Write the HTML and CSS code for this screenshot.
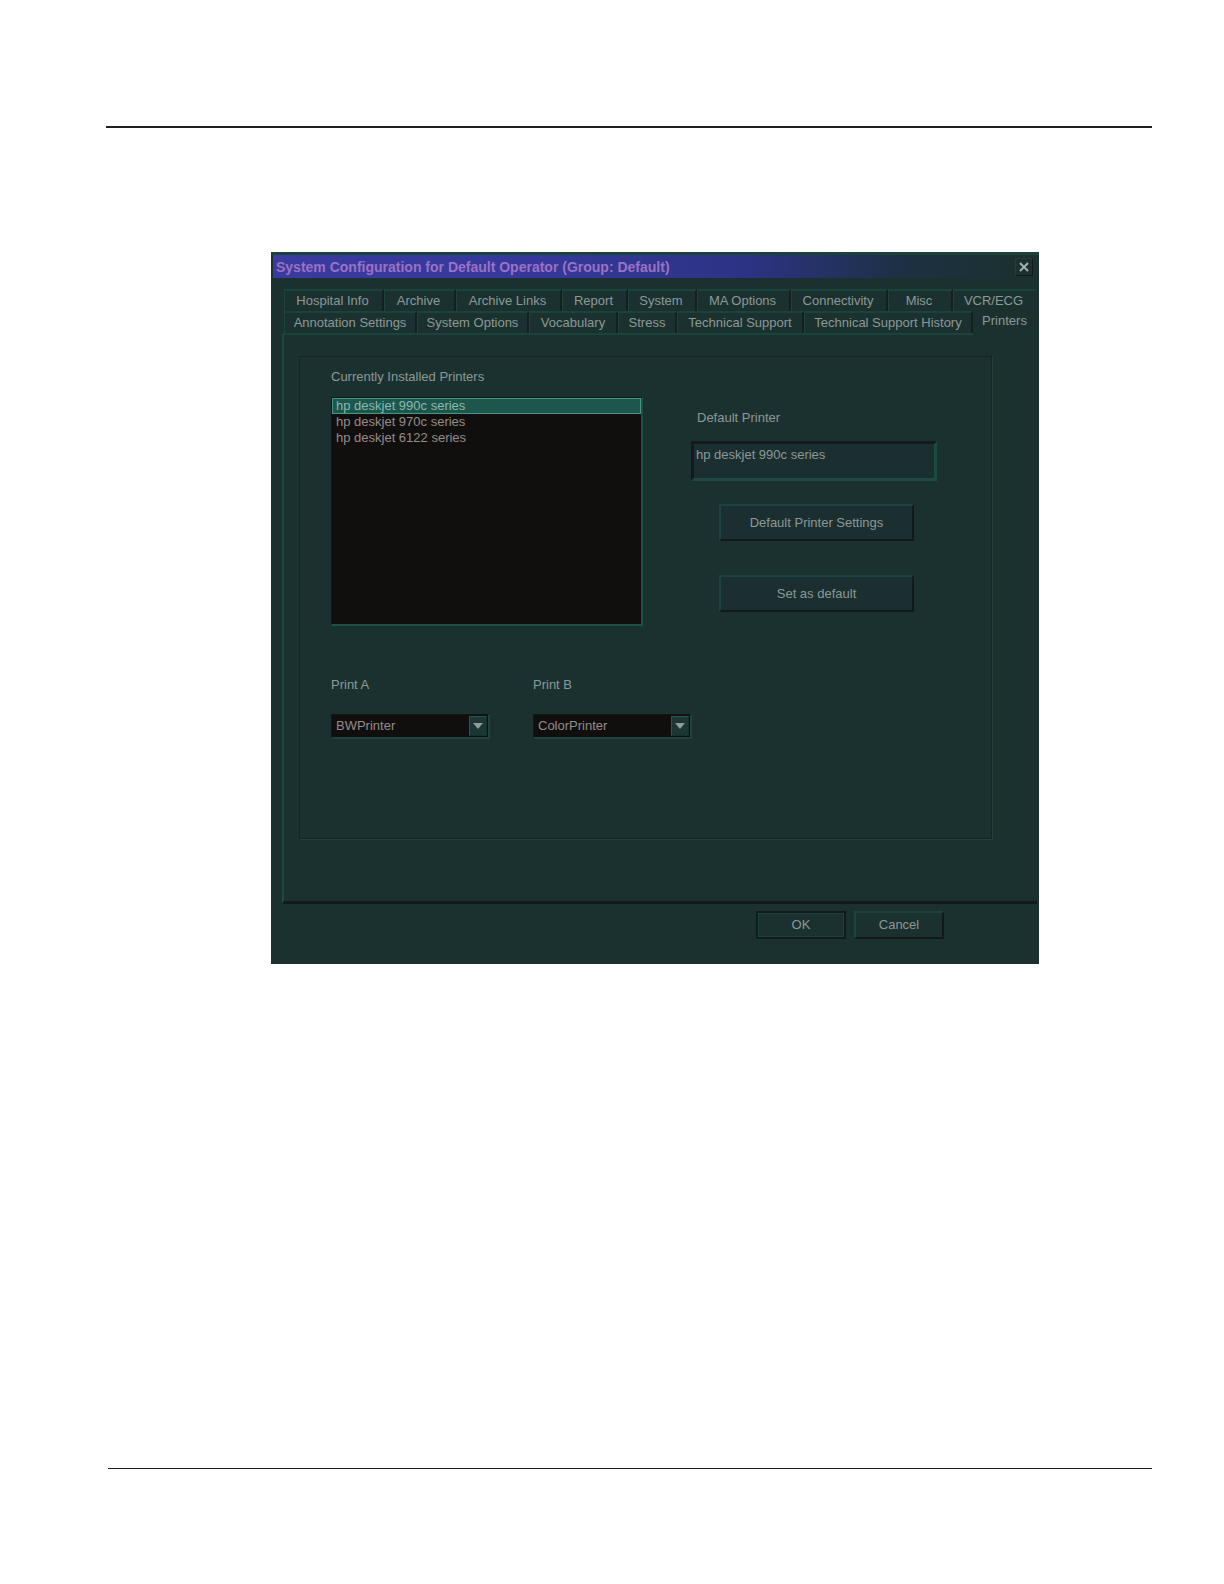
FILE: index.html
```html
<!DOCTYPE html>
<html lang="en">
<head>
    <meta charset="UTF-8">
    <meta name="viewport" content="width=device-width, initial-scale=1.0">
    <title>System Configuration</title>
    <link rel="stylesheet" href="styles.css">
</head>
<body>
    <header class="page-header"></header>

    <main class="content">
        <section class="window">
            <div class="titlebar">
                <h1>System Configuration for Default Operator (Group: Default)</h1>
                <button type="button" class="close" aria-label="Close">
                    <svg width="10" height="10" viewBox="0 0 10 10"><path d="M1 1L9 9M9 1L1 9" stroke="currentColor" stroke-width="2"/></svg>
                </button>
            </div>

            <div class="tabs" role="tablist">
                <div class="tab-row tab-row-back">
                    <button type="button" role="tab">Hospital Info</button>
                    <button type="button" role="tab">Archive</button>
                    <button type="button" role="tab">Archive Links</button>
                    <button type="button" role="tab">Report</button>
                    <button type="button" role="tab">System</button>
                    <button type="button" role="tab">MA Options</button>
                    <button type="button" role="tab">Connectivity</button>
                    <button type="button" role="tab">Misc</button>
                    <button type="button" role="tab">VCR/ECG</button>
                </div>
                <div class="tab-row tab-row-front">
                    <button type="button" role="tab">Annotation Settings</button>
                    <button type="button" role="tab">System Options</button>
                    <button type="button" role="tab">Vocabulary</button>
                    <button type="button" role="tab">Stress</button>
                    <button type="button" role="tab">Technical Support</button>
                    <button type="button" role="tab">Technical Support History</button>
                    <button type="button" role="tab" class="active" aria-selected="true">Printers</button>
                </div>
            </div>

            <form class="panel">
                <div class="group">
                    <div class="columns">
                        <div class="installed">
                            <label for="installed">Currently Installed Printers</label>
                            <select id="installed" class="listbox" size="14">
                                <option selected>hp deskjet 990c series</option>
                                <option>hp deskjet 970c series</option>
                                <option>hp deskjet 6122 series</option>
                            </select>
                        </div>
                        <div class="default">
                            <label for="defaultPrinter">Default Printer</label>
                            <input type="text" id="defaultPrinter" value="hp deskjet 990c series" readonly>
                            <button type="button" class="button wide">Default Printer Settings</button>
                            <button type="button" class="button wide">Set as default</button>
                        </div>
                    </div>
                    <div class="assign">
                        <div class="field">
                            <label for="printA">Print A</label>
                            <div class="combo">
                                <select id="printA">
                                    <option>BWPrinter</option>
                                    <option>ColorPrinter</option>
                                </select>
                                <span class="arrow"><svg width="10" height="6" viewBox="0 0 10 6"><path d="M0 0H10L5 6Z" fill="currentColor"/></svg></span>
                            </div>
                        </div>
                        <div class="field">
                            <label for="printB">Print B</label>
                            <div class="combo">
                                <select id="printB">
                                    <option>ColorPrinter</option>
                                    <option>BWPrinter</option>
                                </select>
                                <span class="arrow"><svg width="10" height="6" viewBox="0 0 10 6"><path d="M0 0H10L5 6Z" fill="currentColor"/></svg></span>
                            </div>
                        </div>
                    </div>
                </div>
            </form>

            <div class="actions">
                <button type="button" class="button ok">OK</button>
                <button type="button" class="button">Cancel</button>
            </div>
        </section>
    </main>

    <footer class="page-footer"></footer>
</body>
</html>
```
FILE: styles.css
```css
* {
    box-sizing: border-box;
}

body {
    display: flex;
    flex-direction: column;
    min-height: 100vh;
    margin: 0;
    padding: 126px 72px 115px 106px;
    background-color: #fff;
    font-family: "Liberation Sans", Arial, sans-serif;
    font-size: 13px;
    line-height: 16px;
    color: #8b9997;
}

button,
input,
select {
    font: inherit;
    color: inherit;
    margin: 0;
    border-radius: 0;
    outline: none;
}

.page-header {
    border-top: 2px solid #202022;
}

.page-footer {
    margin-top: auto;
    margin-left: 2px;
    border-top: 1px solid #202022;
}

.content {
    padding: 124px 113px 0 165px;
}

.window {
    background-color: #1b312f;
    border-top: 3px solid #1c403a;
}

/* Title bar */
.titlebar {
    display: flex;
    align-items: center;
    justify-content: space-between;
    height: 23px;
    margin-left: 2px;
    padding: 0 6px 0 3px;
    background: linear-gradient(to right, #3a3a9f 0%, #35389a 35%, #2c3384 62%, #1d3044 82%, #1b312f 97%);
}

.titlebar h1 {
    margin: 0;
    font-size: 14px;
    font-weight: bold;
    white-space: nowrap;
    color: #9a72c4;
}

.close {
    display: flex;
    align-items: center;
    justify-content: center;
    width: 18px;
    height: 18px;
    padding: 0;
    border: 1px solid;
    border-color: #1e403b #13191b #13191b #1e403b;
    background: #1b312f;
    color: #a3b0ae;
}

/* Tabs */
.tabs {
    padding: 11px 2px 0 13px;
}

.tab-row {
    display: grid;
}

.tab-row-back {
    grid-template-columns: 100fr 72fr 106fr 66fr 69fr 94fr 97fr 65fr 84fr;
}

.tab-row-front {
    grid-template-columns: 133fr 112fr 89fr 59fr 127fr 169fr 64fr;
}

.tab-row button {
    min-width: 0;
    height: 22px;
    padding: 0;
    border: solid;
    border-width: 2px 2px 0 1px;
    border-color: #1b433d #14201f #1b433d #1c443e;
    background: #1b312f;
    white-space: nowrap;
}

.tab-row-back button {
    padding-right: 2px;
}

.tab-row-back button:last-child {
    border-right-color: #1b312f;
}

/* The selected tab runs over the top edge of the tab page */
.tab-row .active {
    position: relative;
    height: 24px;
    margin-bottom: -2px;
    padding-bottom: 7px;
    border-color: #1b312f;
}

/* Tab page */
.panel {
    margin: 0 2px 0 11px;
    padding: 21px 45px 62px 15px;
    border: solid;
    border-width: 2px 0 3px 2px;
    border-color: #1b433d #1b433d #16191c #1c4840;
}

.group {
    min-height: 483px;
    padding: 12px 54px 0 31px;
    border: 1px solid #142523;
    box-shadow: 1px 1px 0 #234039;
}

.group label {
    display: block;
}

.columns {
    display: flex;
    justify-content: space-between;
}

.installed {
    width: 312px;
}

.listbox {
    display: block;
    width: 100%;
    height: 229px;
    margin-top: 12px;
    padding: 0;
    border: solid;
    border-width: 1px 2px 2px 1px;
    border-color: #151516 #1d5047 #1d5047 #151516;
    background-color: #110f0e;
    color: #958c8b;
    overflow: hidden;
}

.listbox option {
    min-height: 16px;
    padding: 0 4px;
    line-height: 16px;
}

.listbox option:checked {
    background: linear-gradient(#1c564d, #1c564d);
    box-shadow: inset 0 0 0 1px #4d9486;
    -webkit-text-fill-color: #8bbab1;
}

.default {
    display: flex;
    flex-direction: column;
    width: 246px;
    padding-top: 41px;
}

.default label {
    padding-left: 6px;
}

.default input {
    height: 40px;
    margin-top: 15px;
    padding: 0 2px 14px;
    border: 3px solid;
    border-color: #14191b #1c4941 #1c4941 #14191b;
    background: #1b2f31;
}

.button {
    width: 90px;
    height: 28px;
    padding: 0;
    border: 2px solid;
    border-color: #1c443e #14191b #14191b #1c443e;
    background: #1b312f;
}

.wide {
    width: 195px;
    height: 37px;
    margin: 23px 0 0 28px;
    background: #1b2f30;
}

.wide + .wide {
    margin-top: 34px;
}

.assign {
    display: flex;
    gap: 43px;
    margin-top: 51px;
}

.combo {
    position: relative;
    width: 159px;
    margin-top: 21px;
}

.combo select {
    display: block;
    width: 100%;
    height: 25px;
    padding: 0 24px 0 4px;
    appearance: none;
    border: solid;
    border-width: 1px 2px 2px 1px;
    border-color: #151516 #1c443e #1c443e #151516;
    background: #110f0e;
    color: #958c8b;
}

.arrow {
    position: absolute;
    top: 2px;
    right: 3px;
    display: flex;
    align-items: center;
    justify-content: center;
    width: 18px;
    height: 20px;
    border: 1px solid;
    border-color: #24584f #14302c #14302c #24584f;
    background: #1b3634;
    color: #8f9d9c;
    pointer-events: none;
}

/* Bottom buttons */
.actions {
    display: flex;
    justify-content: flex-end;
    gap: 8px;
    padding: 7px 95px 25px 0;
}

.ok {
    box-shadow: inset 0 0 0 1px #1c443e;
    border-color: #14191b;
}
```
